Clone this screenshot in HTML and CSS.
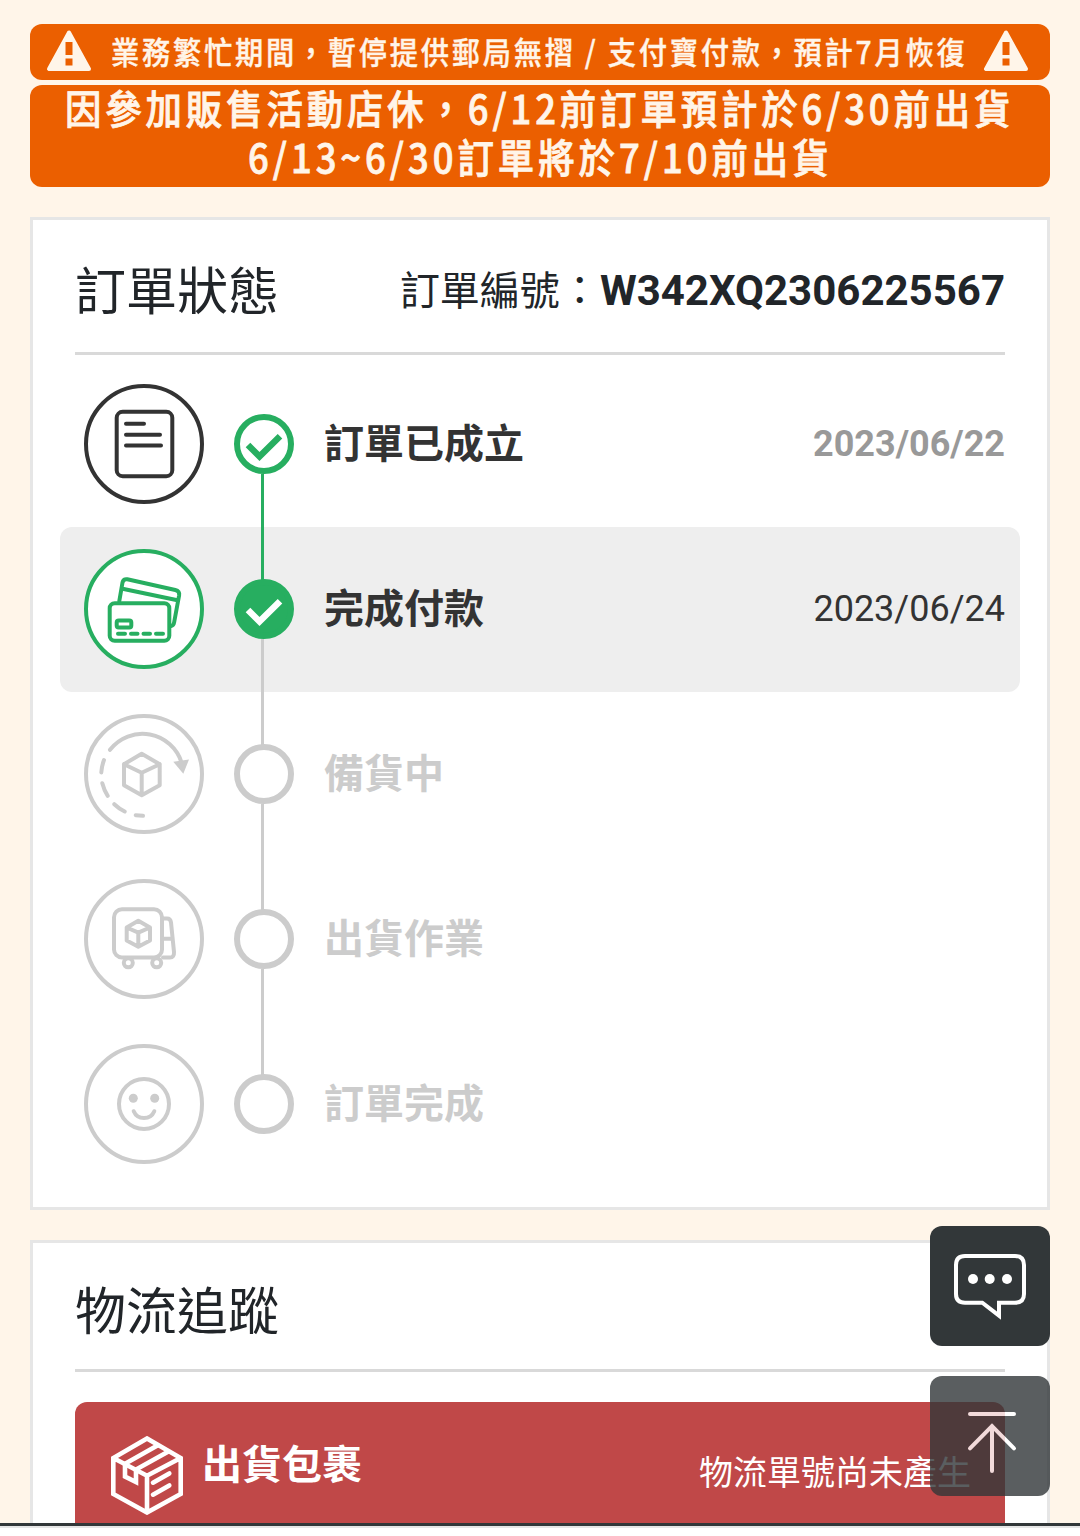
FILE: index.html
```html
<!DOCTYPE html>
<html lang="zh-Hant">
<head>
  <meta charset="UTF-8" />
  <meta name="viewport" content="width=device-width, initial-scale=1.0"/>
  <title>訂單狀態</title>
  <link rel="stylesheet" href="styles.css">
</head>
<body>
  <main class="page">
    <div class="notices">
      <svg class="notice" width="1020" height="56" viewBox="0 0 1020 56">
        <g id="warn">
          <path class="warn-shape" d="M39 8.500L19 45h40z"/>
          <path class="warn-mark" d="M35.500 18h7v13h-7zM35.500 34.500h7v7h-7z"/>
        </g>
        <use href="#warn" x="937"/>
        <text class="notice-text small" transform="translate(81 39.500) scale(.91 1)" textLength="938">業務繁忙期間，暫停提供郵局無摺 / 支付寶付款，預計7月恢復</text>
      </svg>
      <svg class="notice" width="1020" height="102" viewBox="0 0 1020 102">
        <text class="notice-text" transform="translate(35 38.500) scale(.91 1)" textLength="1039">因參加販售活動店休，6/12前訂單預計於6/30前出貨</text>
        <text class="notice-text" transform="translate(218 87.500) scale(.91 1)" textLength="638">6/13~6/30訂單將於7/10前出貨</text>
      </svg>
    </div>

    <section class="card status">
      <header class="card-head">
        <h2>訂單狀態</h2>
        <p class="order-no">訂單編號：<strong>W342XQ2306225567</strong></p>
      </header>
      <ul class="steps">
        <li class="step done">
          <svg class="icon" viewBox="0 0 120 120">
            <circle cx="60" cy="60" r="58"/>
            <rect x="32.700" y="27.800" width="55.600" height="64.400" rx="6"/>
            <path d="M42 39.800h18M42 50.800h34M42 61.500h35"/>
          </svg>
          <span class="dot"><svg viewBox="0 0 60 60"><path d="M14 31l11.500 11.500L46 22.200"/></svg></span>
          <span class="label">訂單已成立</span>
          <time>2023/06/22</time>
        </li>
        <li class="step current">
          <svg class="icon" viewBox="0 0 120 120">
            <circle cx="60" cy="60" r="58"/>
            <rect x="25.700" y="54.200" width="59.600" height="37.600" rx="5"/>
            <path d="M35.300 52l3.200-18.500q.8-4 4.800-3.200l48 10.700q4.500 1 3.800 5.500l-5 27q-.5 3-3 3.500M38.500 39.800l55 11.500"/>
            <rect x="32.700" y="71.500" width="14.600" height="7" rx="2"/>
            <path d="M34 84.800h7M47 84.800h6.500M59.500 84.800h6.500M72 84.800h7"/>
          </svg>
          <span class="dot"><svg viewBox="0 0 60 60"><path d="M14 31l11.500 11.500L46 22.200"/></svg></span>
          <span class="label">完成付款</span>
          <time>2023/06/24</time>
        </li>
        <li class="step">
          <svg class="icon" viewBox="0 0 120 120">
            <circle cx="60" cy="60" r="58"/>
            <path d="M26 35.800A41 41 0 0 1 97.700 49M20 46q-2.300 6-2.700 12.500M18.300 69.200q1.700 6.800 5.400 12.600M30.300 90.200q4.700 4.500 10.400 7.300M51.700 101.200l7.300.6"/>
            <path class="solid" d="M89.300 47.800L105 45.500L99.300 59.800z"/>
            <path d="M57.700 39.800l18 10.400v21l-18 10-17.700-10v-21zM40 50.200l17.700 8.600 18-8.600M57.700 58.800v22.400"/>
          </svg>
          <span class="dot"></span>
          <span class="label">備貨中</span>
        </li>
        <li class="step">
          <svg class="icon" viewBox="0 0 120 120">
            <circle cx="60" cy="60" r="58"/>
            <rect x="30" y="30.200" width="48" height="48.300" rx="8"/>
            <path d="M79 39.500h4q3.500 0 4 4l3 29.500q.3 5.500-4 5.500h-7M79 59.800h9"/>
            <path d="M54.300 41.800l11.700 6.700v13l-11.700 6.300-11.600-6.300v-13zM42.700 48.500l11.600 5.200 11.700-5.200M54.300 53.700v14"/>
            <circle class="wheel" cx="44.300" cy="83.800" r="4.500"/>
            <circle class="wheel" cx="72.700" cy="83.800" r="4.500"/>
          </svg>
          <span class="dot"></span>
          <span class="label">出貨作業</span>
        </li>
        <li class="step">
          <svg class="icon" viewBox="0 0 120 120">
            <circle cx="60" cy="60" r="58"/>
            <circle cx="60" cy="60" r="25"/>
            <circle class="solid" cx="49.300" cy="54.200" r="4.500"/>
            <circle class="solid" cx="70.700" cy="54.200" r="4.500"/>
            <path d="M49.700 67.200a11.200 11.200 0 0 0 20.600 0"/>
          </svg>
          <span class="dot"></span>
          <span class="label">訂單完成</span>
        </li>
      </ul>
    </section>

    <section class="card tracking">
      <header class="card-head">
        <h2>物流追蹤</h2>
      </header>
      <div class="parcel">
        <svg class="box" viewBox="0 0 72 79">
          <path d="M36 2.500L69.700 22v36L36 76.500L2.300 58V22zM2.300 22L36 39.700L69.700 22M36 39.700v37"/>
          <path d="M47.300 9L14 27.800v12.700L25 46V33.500L58.300 15"/>
          <path class="round" d="M42 46.700l16.300-9.200M42 58.700l16.300-9.200"/>
        </svg>
        <h3>出貨包裹</h3>
        <p>物流單號尚未產生</p>
      </div>
    </section>
  </main>

  <div class="float-tools">
    <a class="tool chat">
      <svg viewBox="0 0 120 120">
        <path d="M35 30h50q9 0 9 9v29q0 8.700-9 8.700H69v13L52.300 76.700H35q-9 0-9-8.700V39q0-9 9-9z"/>
        <circle cx="43" cy="53" r="5"/>
        <circle cx="59.700" cy="53" r="5"/>
        <circle cx="77" cy="53" r="5"/>
      </svg>
    </a>
    <a class="tool top">
      <svg viewBox="0 0 120 120">
        <path d="M40 38h44M40 72.300l22-22.300 22 22.300M62 50v45"/>
      </svg>
    </a>
  </div>
</body>
</html>
```
FILE: styles.css
```css
* {
  box-sizing: border-box;
  margin: 0;
  padding: 0;
}

body {
  height: 1536px;
  overflow: hidden;
  background: #fff;
  color: #212529;
  font-family: Roboto, "Noto Sans CJK TC", sans-serif;
}

.page {
  height: 1526px;
  padding: 23.5px 30px 0;
  overflow: hidden;
  background: #fff5e9;
  border-bottom: 3px solid #323739;
  box-shadow: 0 2px #e6e6e6;
  display: flex;
  flex-direction: column;
}

/* notices */
.notices {
  display: flex;
  flex-direction: column;
  gap: 5px;
  margin-bottom: 30px;
}

.notice {
  display: block;
  background: #eb5f00;
  border-radius: 12px;
}

.notice-text {
  font-family: "Noto Sans CJK TC", sans-serif;
  font-weight: 500;
  font-size: 40px;
  fill: #fff5e9;
  stroke: #fff5e9;
  stroke-width: .8;
}

.notice-text.small {
  font-size: 31px;
  stroke-width: .4;
}

.warn-shape {
  fill: #fff5e9;
  stroke: #fff5e9;
  stroke-width: 4;
  stroke-linejoin: round;
}

.warn-mark {
  fill: #eb5f00;
}

/* cards */
.card {
  flex: none;
  background: #fff;
  border: 3px solid #e6e6e6;
  padding: 0 42px;
}

.status {
  height: 993px;
  margin-bottom: 30px;
}

.tracking {
  height: 283px;
  border-bottom: 0;
}

.card-head {
  display: flex;
  align-items: center;
  justify-content: space-between;
  height: 135px;
  padding-top: 4px;
  border-bottom: 3px solid #d9d9d9;
}

.tracking .card-head {
  height: 129px;
}

h2 {
  font-size: 51px;
  font-weight: 400;
}

.order-no {
  font-size: 40px;
}

.order-no strong {
  font-size: 42px;
}

/* steps */
.steps {
  list-style: none;
  margin: 7px -15px 0;
}

.step {
  --tone: #ccc;
  --line: #ccc;
  position: relative;
  display: flex;
  align-items: center;
  height: 165px;
  padding: 0 15px 0 24px;
  border-radius: 12px;
  color: #ccc;
}

.step.done {
  --tone: #333;
  --line: #27ae60;
  color: #333;
}

.step.current {
  --tone: #27ae60;
  background: #eee;
  color: #333;
}

/* line running down to the next dot */
.step:not(:last-child)::after {
  content: "";
  position: absolute;
  left: 201px;
  top: 112px;
  width: 3px;
  height: 106px;
  background: var(--line);
  z-index: 1;
}

.icon {
  width: 120px;
  height: 120px;
  margin-right: 30px;
  fill: none;
  stroke: var(--tone);
  stroke-width: 4;
  stroke-linecap: round;
  stroke-linejoin: round;
}

.icon > circle:first-child {
  fill: #fff;
}

.icon .solid {
  fill: var(--tone);
  stroke: none;
}

.icon .wheel {
  fill: #fff;
}

.dot {
  width: 60px;
  height: 60px;
  margin-right: 30px;
  border: 6px solid #ccc;
  border-radius: 50%;
  background: #fff;
}

.done .dot,
.current .dot {
  border-color: #27ae60;
}

.current .dot {
  background: #27ae60;
}

.dot svg {
  display: block;
  width: 60px;
  height: 60px;
  margin: -6px;
  fill: none;
  stroke: #27ae60;
  stroke-width: 6.5;
}

.current .dot svg {
  stroke: #fff;
}

.label {
  font-size: 40px;
  font-weight: 700;
  padding-bottom: 7px;
}

time {
  margin-left: auto;
  font-size: 36px;
}

.done time {
  color: #999;
  font-weight: 700;
}

.current time {
  color: #333;
}

/* parcel */
.parcel {
  display: flex;
  height: 150px;
  margin-top: 30px;
  padding: 34px 34px 0 36px;
  background: #c04848;
  border-radius: 12px 12px 0 0;
  color: #fff;
}

.box {
  width: 72px;
  height: 79px;
  margin-right: 19px;
  fill: none;
  stroke: #fff;
  stroke-width: 4.6;
}

.box .round {
  stroke-linecap: round;
}

.parcel h3 {
  font-size: 40px;
  line-height: 60px;
}

.parcel p {
  margin-left: auto;
  font-size: 34px;
  line-height: 75px;
}

/* floating buttons */
.float-tools {
  position: absolute;
  left: 930px;
  top: 1226px;
  display: flex;
  flex-direction: column;
  gap: 30px;
  z-index: 5;
}

.tool {
  width: 120px;
  height: 120px;
  border-radius: 12px;
  background: #323739;
}

.tool svg {
  display: block;
  fill: none;
  stroke: #fff;
  stroke-width: 4;
  stroke-linecap: round;
}

.chat circle {
  fill: #fff;
  stroke: none;
}

.top {
  opacity: .8;
}
```
